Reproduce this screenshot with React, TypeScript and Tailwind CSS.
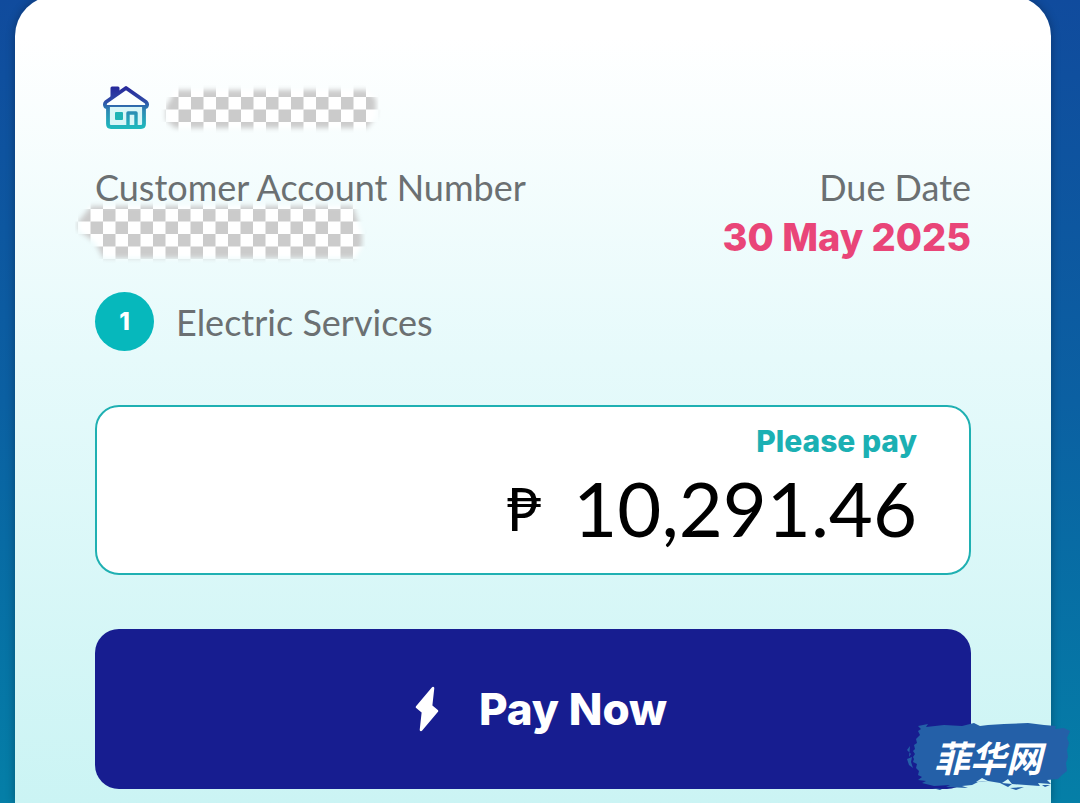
import React from 'react';
import { clsx } from 'clsx';

interface RedactedProps {
  id: string;
  width: number;
  height: number;
  offsetX: number;
  offsetY: number;
  shape: string;
  className?: string;
}

const CELL = 12.5;

const Redacted = ({ id, width, height, offsetX, offsetY, shape, className }: RedactedProps) => {
  return (
    <svg width={width} height={height} className={clsx('block shrink-0', className)} aria-hidden="true">
      <defs>
        <pattern
          id={`${id}-cells`}
          width={CELL * 2}
          height={CELL * 2}
          x={offsetX}
          y={offsetY}
          patternUnits="userSpaceOnUse"
        >
          <rect width={CELL * 2} height={CELL * 2} fill="#ffffff" />
          <rect width={CELL} height={CELL} fill="#cbcbcb" />
          <rect x={CELL} y={CELL} width={CELL} height={CELL} fill="#cbcbcb" />
        </pattern>
        <filter id={`${id}-soft`} x="-10%" y="-20%" width="120%" height="140%">
          <feGaussianBlur stdDeviation="2.8" />
        </filter>
        <mask id={`${id}-mask`} maskUnits="userSpaceOnUse" x="0" y="0" width={width} height={height}>
          <path d={shape} fill="#ffffff" filter={`url(#${id}-soft)`} />
        </mask>
      </defs>
      <rect width={width} height={height} fill={`url(#${id}-cells)`} mask={`url(#${id}-mask)`} />
    </svg>
  );
};

const HouseIcon = () => {
  return (
    <svg width="48" height="50" viewBox="0 0 48 50" fill="none" className="shrink-0" aria-hidden="true">
      <defs>
        <linearGradient id="house" x1="0" y1="2" x2="0" y2="44" gradientUnits="userSpaceOnUse">
          <stop offset="0" stopColor="#26269a" />
          <stop offset="0.35" stopColor="#2f4aa6" />
          <stop offset="0.6" stopColor="#2c8bb4" />
          <stop offset="1" stopColor="#1fb9bd" />
        </linearGradient>
      </defs>
      <path d="M9 13V4h6v4z" fill="url(#house)" stroke="url(#house)" strokeWidth="3" strokeLinejoin="round" />
      <path
        d="M23 4 3 18c-2 2-1 5 1 5h38c2 0 3-3 1-5z"
        fill="#fbffff"
        stroke="url(#house)"
        strokeWidth="3.8"
        strokeLinejoin="round"
      />
      <path
        d="M5 23v17c0 2 1 3 3 3h30c2 0 3-1 3-3V23"
        fill="#d9f6f8"
        stroke="url(#house)"
        strokeWidth="3.8"
      />
      <rect x="12" y="28" width="8" height="8" rx="1" fill="#1fb3b5" />
      <path d="M25 42V29h8v13" stroke="url(#house)" strokeWidth="3.4" strokeLinejoin="round" />
    </svg>
  );
};

const BoltIcon = () => {
  return (
    <svg width="24" height="46" viewBox="0 0 24 46" className="shrink-0" aria-hidden="true">
      <path
        d="M18 2 2 21 8 26 6 44 22 25 16 20z"
        fill="#ffffff"
        stroke="#ffffff"
        strokeWidth="2.6"
        strokeLinejoin="round"
      />
    </svg>
  );
};

const SiteBadge = () => {
  return (
    <div className="absolute right-2 bottom-3 w-[168px] h-[70px] flex items-center justify-center">
      <svg viewBox="0 0 168 70" className="absolute inset-0 w-full h-full" aria-hidden="true">
        <path
          d="M14 5 24 3 22 6 40 4 58 5 70 2 76 5 84 4 100 3 124 2 140 4 152 5 151 8 160 7 166 10 163 17 165 22 163 29 164 36 162 42 163 50 158 54 154 58 143 59 147 63 134 62 136 65 122 64 108 63 104 66 96 62 84 60 74 61 68 64 58 65 64 67 42 66 46 64 30 65 18 62 22 60 14 59 18 56 14 54 15 50 12 47 13 43 9 41 10 38 9 36 11 33 9 30 11 28 10 24 13 22 12 18 16 14 14 10 17 8z"
          fill="#2460a8"
        />
        <path
          d="M6 25 3 29 7 33 5 36zM8 36 3 38 5 44 9 47 7 41zM28 67 38 68 36 69zM106 67 120 66 112 69zM138 64 146 64 141 66z"
          fill="#2460a8"
        />
        <path d="M72 61 78 57 84 60zM98 62 104 58 108 63z" fill="#d4f6f6" />
      </svg>
      <span className="relative font-['Noto_Sans_CJK_SC',sans-serif] text-4xl font-bold italic text-white">
        菲华网
      </span>
    </div>
  );
};

const BillHeader = () => {
  return (
    <div className="flex items-center gap-2">
      <div className="pl-2">
        <HouseIcon />
      </div>
      <Redacted
        id="name"
        width={224}
        height={50}
        offsetX={7}
        offsetY={13}
        shape="M14 6H208L217 15V32L208 44H16L7 36V22L12 15z"
      />
    </div>
  );
};

const AccountInfo = () => {
  return (
    <div className="mt-7 flex justify-between">
      <div>
        <p className="text-4xl leading-[50px] text-[#6b7072]">Customer Account Number</p>
        <Redacted
          id="account"
          className="-mt-3 -ml-5"
          width={292}
          height={64}
          offsetX={3}
          offsetY={9}
          shape="M16 6H278L282 18L287 34V46L280 58H28L20 42L3 30V22z"
        />
      </div>
      <div className="text-right">
        <p className="text-4xl leading-[50px] text-[#6b7072]">Due Date</p>
        <p className="font-['Inter',sans-serif] text-[38px] leading-[50px] font-extrabold text-[#e94578]">
          30 May 2025
        </p>
      </div>
    </div>
  );
};

const ServiceRow = () => {
  return (
    <div className="mt-7 flex items-center gap-[22px]">
      <span className="size-[59px] rounded-full bg-[#06b8bc] flex items-center justify-center font-['Inter',sans-serif] text-2xl font-extrabold text-white">
        1
      </span>
      <span className="text-4xl text-[#6b7072]">Electric Services</span>
    </div>
  );
};

const AmountBox = () => {
  return (
    <div className="mt-[54px] rounded-3xl border-2 border-[#1fb0b2] bg-white px-[52px] pt-3 pb-5 text-right">
      <p className="font-['Inter',sans-serif] text-3xl leading-[44px] font-extrabold text-[#1bb0b3]">
        Please pay
      </p>
      <p className="flex items-center justify-end gap-8 leading-[90px] text-black">
        <span className="text-6xl">₱</span>
        <span className="text-[76px]">10,291.46</span>
      </p>
    </div>
  );
};

export default function App() {
  return (
    <main className="relative min-h-screen flex overflow-hidden bg-linear-to-b from-[#104b9d] via-[#0b60a2] to-[#057fa7] font-['Lato',sans-serif]">
      <section className="-mt-1 ml-[15px] mr-[29px] flex-1 rounded-t-[40px] bg-linear-to-b from-white from-5% via-[#e6fafb] via-45% to-[#cbf4f4] px-20 pt-[88px] pb-[14px] shadow-[0_0_10px_rgba(0,0,0,0.3)]">
        <BillHeader />
        <AccountInfo />
        <ServiceRow />
        <AmountBox />
        <button
          type="button"
          className="mt-[54px] w-full h-40 rounded-3xl bg-[#171d90] pl-4 flex items-center justify-center gap-10 font-['Inter',sans-serif] text-[44px] font-extrabold text-white"
        >
          <BoltIcon />
          Pay Now
        </button>
      </section>
      <SiteBadge />
    </main>
  );
}
